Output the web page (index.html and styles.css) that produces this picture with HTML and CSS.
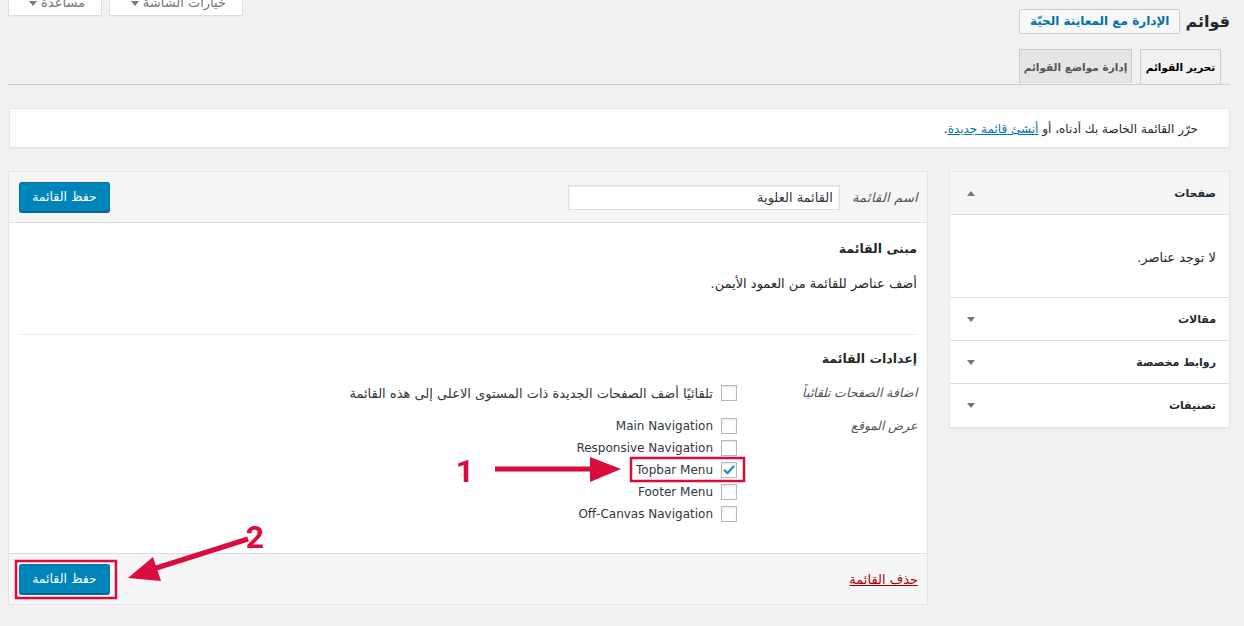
FILE: index.html
```html
<!DOCTYPE html>
<html lang="ar" dir="rtl">
<head>
    <meta charset="UTF-8">
    <title>قوائم</title>
    <link rel="stylesheet" href="styles.css">
</head>
<body>

<div class="wrap">
    <div class="top-row">
        <div class="title-area">
            <h1>قوائم</h1>
            <a class="page-title-action">الإدارة مع المعاينة الحيّة</a>
        </div>
        <div class="screen-links">
            <span class="meta-btn">خيارات الشاشة <i class="tri-down"></i></span>
            <span class="meta-btn">مساعدة <i class="tri-down"></i></span>
        </div>
    </div>

    <div class="nav-tabs">
        <span class="nav-tab active">تحرير القوائم</span>
        <span class="nav-tab">إدارة مواضع القوائم</span>
    </div>

    <div class="manage-menus">
        حرّر القائمة الخاصة بك أدناه، أو <a href="#">أنشئ قائمة جديدة</a>.
    </div>

    <div class="menus-frame">
        <div class="side-col">
            <div class="acc-section open">
                <div class="acc-title">صفحات <i class="tri-up"></i></div>
                <div class="acc-content">لا توجد عناصر.</div>
            </div>
            <div class="acc-section">
                <div class="acc-title">مقالات <i class="tri-down"></i></div>
            </div>
            <div class="acc-section">
                <div class="acc-title">روابط مخصصة <i class="tri-down"></i></div>
            </div>
            <div class="acc-section">
                <div class="acc-title">تصنيفات <i class="tri-down"></i></div>
            </div>
        </div>

        <div class="menu-edit">
            <div class="menu-header">
                <label class="name-label">اسم القائمة</label>
                <input class="name-input" type="text" value="القائمة العلوية">
                <span class="spacer"></span>
                <span class="button-primary">حفظ القائمة</span>
            </div>

            <div class="menu-body">
                <h3>مبنى القائمة</h3>
                <p class="hint">أضف عناصر للقائمة من العمود الأيمن.</p>
                <div class="divider"></div>
                <h3>إعدادات القائمة</h3>

                <div class="setting-row">
                    <div class="setting-label">اضافة الصفحات تلقائياً</div>
                    <div class="setting-input">
                        <label class="check-line ar"><span class="checkbox"></span>تلقائيًا أضف الصفحات الجديدة ذات المستوى الاعلى إلى هذه القائمة</label>
                    </div>
                </div>

                <div class="setting-row locations">
                    <div class="setting-label">عرض الموقع</div>
                    <div class="setting-input">
                        <label class="check-line"><span class="checkbox"></span>Main Navigation</label>
                        <label class="check-line"><span class="checkbox"></span>Responsive Navigation</label>
                        <label class="check-line"><span class="checkbox checked">
                            <svg viewBox="0 0 16 16" width="16" height="16"><path d="M3.6 8.4 L6.4 11.2 L12.6 4.6" fill="none" stroke="#1e8cbe" stroke-width="2.2" stroke-linecap="round" stroke-linejoin="round"/></svg>
                        </span>Topbar Menu</label>
                        <label class="check-line"><span class="checkbox"></span>Footer Menu</label>
                        <label class="check-line"><span class="checkbox"></span>Off-Canvas Navigation</label>
                    </div>
                </div>
            </div>

            <div class="menu-footer">
                <a class="delete-link" href="#">حذف القائمة</a>
                <span class="spacer"></span>
                <span class="button-primary">حفظ القائمة</span>
            </div>
        </div>
    </div>
</div>

<!-- annotations drawn over the screenshot -->
<svg class="marks" width="1244" height="626" viewBox="0 0 1244 626">
    <rect x="631" y="458" width="113" height="23" fill="none" stroke="#dc0b3d" stroke-width="2.5"/>
    <rect x="16" y="561" width="100" height="37" fill="none" stroke="#dc0b3d" stroke-width="2.5"/>
    <text x="474" y="482" class="mark-num">1</text>
    <line x1="495" y1="469" x2="596" y2="469" stroke="#dc0b3d" stroke-width="5"/>
    <polygon points="590,457 621,469 590,482" fill="#dc0b3d"/>
    <text x="264" y="548" class="mark-num">2</text>
    <line x1="248" y1="539" x2="150" y2="570" stroke="#dc0b3d" stroke-width="5"/>
    <polygon points="128,578 153,557 161,581" fill="#dc0b3d"/>
</svg>

</body>
</html>
```

FILE: styles.css
```css
body {
    margin: 0;
    background-color: #f1f1f1;
    color: #23282d;
    font-family: Tahoma, "DejaVu Sans", sans-serif;
    font-size: 12px;
    direction: rtl;
    overflow: hidden;
}
.wrap {
    padding: 0 14px 0 8px;
}
.top-row {
    display: flex;
    justify-content: space-between;
    align-items: flex-start;
}
.title-area {
    display: flex;
    align-items: center;
    margin-top: 9px;
}
.title-area h1 {
    margin: 0 0 0 5px;
    font-size: 16px;
    font-weight: bold;
    line-height: 25px;
}
.page-title-action {
    display: inline-block;
    height: 23px;
    line-height: 23px;
    padding: 0 10px;
    border: 1px solid #ccc;
    border-radius: 2px;
    background: #f7f7f7;
    color: #0073aa;
    font-weight: bold;
    font-size: 12px;
}
.screen-links {
    display: flex;
    gap: 7px;
    margin-top: -10px;
}
.meta-btn {
    display: inline-block;
    height: 25px;
    line-height: 25px;
    padding: 0 16px;
    background: #fff;
    border: 1px solid #ddd;
    border-top: none;
    box-shadow: 0 1px 1px rgba(0,0,0,0.04);
    color: #72777c;
    font-size: 13px;
}
.meta-btn:first-child {
    width: 100px;
}
.meta-btn:last-child {
    width: 60px;
}
.tri-down, .tri-up {
    display: inline-block;
    width: 0;
    height: 0;
    border-left: 4px solid transparent;
    border-right: 4px solid transparent;
    vertical-align: middle;
}
.tri-down {
    border-top: 5px solid #72777c;
}
.tri-up {
    border-bottom: 5px solid #72777c;
}

.nav-tabs {
    display: flex;
    gap: 8px;
    margin-top: 15px;
    padding-right: 9px;
    border-bottom: 1px solid #ccc;
    height: 35px;
}
.nav-tab {
    display: inline-block;
    box-sizing: border-box;
    width: 113px;
    height: 34px;
    line-height: 34px;
    text-align: center;
    border: 1px solid #ccc;
    border-bottom: none;
    background: #e5e5e5;
    color: #555;
    font-weight: bold;
    font-size: 10.5px;
}
.nav-tab.active {
    width: 81px;
    background: #f1f1f1;
    color: #000;
    height: 35px;
    margin-bottom: -1px;
}

.manage-menus {
    margin-top: 23px;
    margin-left: 1px;
    height: 38px;
    line-height: 40px;
    padding-right: 31px;
    background: #fdfdfd;
    border: 1px solid #e5e5e5;
    box-shadow: 0 1px 1px rgba(0,0,0,0.04);
    font-size: 12px;
}
.manage-menus a {
    color: #0073aa;
}

.menus-frame {
    display: flex;
    align-items: flex-start;
    gap: 20px;
    margin-top: 23px;
}
.side-col {
    width: 279px;
    flex: none;
    margin-left: 1px;
    background: #fff;
    border: 1px solid #e5e5e5;
    box-shadow: 0 1px 1px rgba(0,0,0,0.04);
}
.acc-title {
    display: flex;
    justify-content: space-between;
    align-items: center;
    height: 42px;
    padding: 0 13px 0 17px;
    border-bottom: 1px solid #ddd;
    font-weight: bold;
    font-size: 11px;
    color: #23282d;
}
.acc-section:last-child .acc-title {
    border-bottom: none;
    height: 43px;
}
.acc-section.open .acc-title {
    background: #f5f5f5;
}
.acc-content {
    height: 82px;
    line-height: 86px;
    padding-right: 13px;
    border-bottom: 1px solid #ddd;
    font-size: 13px;
}

.menu-edit {
    flex: 1;
    background: #fff;
    border: 1px solid #e5e5e5;
    box-shadow: 0 1px 1px rgba(0,0,0,0.04);
}
.menu-header, .menu-footer {
    display: flex;
    align-items: center;
    height: 50px;
    padding: 0 9px 0 10px;
    background: #f5f5f5;
}
.menu-header {
    border-bottom: 1px solid #ddd;
}
.menu-footer {
    border-top: 1px solid #ddd;
}
.spacer {
    flex: 1;
}
.name-label {
    font-style: italic;
    font-size: 13px;
    color: #555;
    margin-left: 12px;
}
.name-input {
    width: 258px;
    height: 23px;
    padding: 0 6px;
    border: 1px solid #ddd;
    box-shadow: inset 0 1px 2px rgba(0,0,0,0.07);
    font-family: Tahoma, "DejaVu Sans", sans-serif;
    font-size: 13px;
    color: #32373c;
    direction: rtl;
}
.button-primary {
    display: inline-block;
    box-sizing: border-box;
    width: 91px;
    height: 30px;
    line-height: 27px;
    text-align: center;
    background: #0085ba;
    border: 1px solid #0073aa;
    border-bottom-color: #006799;
    border-radius: 3px;
    box-shadow: 0 1px 0 #006799;
    color: #fff;
    font-size: 12.5px;
}

.menu-body {
    height: 330px;
    padding: 0 10px;
}
.menu-body h3 {
    margin: 0;
    font-size: 12.5px;
    font-weight: bold;
    line-height: 20px;
}
.menu-body h3:first-child {
    padding-top: 16px;
}
.hint {
    margin: 15px 0 0;
    line-height: 20px;
    font-size: 13px;
}
.divider {
    margin-top: 40px;
    height: 1px;
    background: #eee;
    margin-bottom: 14px;
}
.setting-row {
    display: flex;
    margin-top: 13px;
}
.setting-row.locations {
    margin-top: 11px;
}
.setting-label {
    width: 180px;
    flex: none;
    font-style: italic;
    color: #555;
    font-size: 12.5px;
    line-height: 22px;
}
.check-line {
    display: flex;
    align-items: center;
    height: 22px;
    font-size: 12px;
    color: #32373c;
}
.check-line.ar {
    font-size: 13px;
}
.checkbox {
    display: inline-block;
    flex: none;
    width: 14px;
    height: 14px;
    margin-left: 8px;
    border: 1px solid #b4b9be;
    background: #fff;
    box-shadow: inset 0 1px 2px rgba(0,0,0,0.1);
    position: relative;
}
.checkbox svg {
    position: absolute;
    top: -1px;
    left: -1px;
}
.delete-link {
    color: #a00;
    font-size: 13px;
}

.marks {
    position: absolute;
    top: 0;
    left: 0;
    pointer-events: none;
}
.mark-num {
    fill: #dc0b3d;
    font-family: "Liberation Sans Narrow", Roboto, "DejaVu Sans Condensed", sans-serif;
    font-weight: bold;
    font-size: 32px;
}
```
